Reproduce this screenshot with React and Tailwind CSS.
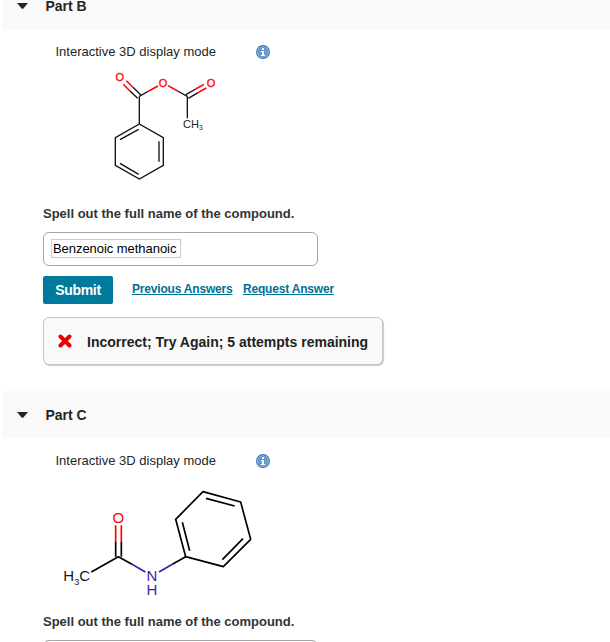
import React from "react";

function InfoIcon() {
  return (
    <svg width="14" height="14" viewBox="0 0 14 14" className="block">
      <defs>
        <linearGradient id="info" x1="0" y1="0" x2="0" y2="1">
          <stop offset="0" stopColor="#5f98d0" />
          <stop offset="1" stopColor="#6c98d2" />
        </linearGradient>
      </defs>
      <circle cx="7" cy="7" r="6.4" fill="#a9c6e6" stroke="#416fb0" strokeWidth="1.1" />
      <circle cx="7" cy="7" r="5.2" fill="url(#info)" />
      <path d="M6 3h2v2H6zM5 6H8v4h1v1H5v-1h1V7H5z" fill="#fff" />
    </svg>
  );
}

function PartHeader({ title, raised }) {
  return (
    <div className={`ml-[3px] flex h-[47px] items-center bg-[#f9f9f9] pl-[14px] ${raised ? "pb-[2px]" : ""}`}>
      <svg width="11" height="6" viewBox="0 0 11 6" className="block">
        <path d="M0 0H11L6.4 5.4Q5.5 6.2 4.6 5.4Z" fill="#252525" />
      </svg>
      <h2 className="ml-[17.5px] text-[14px] leading-[18px] font-bold text-[#252525]">{title}</h2>
    </div>
  );
}

function DisplayMode() {
  return (
    <div className="flex h-4 items-center pl-[55.5px]">
      <span className="w-[200.5px] text-[13px] leading-4 whitespace-nowrap text-[#252525]">
        Interactive 3D display mode
      </span>
      <InfoIcon />
    </div>
  );
}

/* Benzoic acetic anhydride */
function Anhydride() {
  return (
    <svg width="130" height="130" viewBox="0 0 390 390" className="mt-1 ml-[100px] block" fontFamily="Liberation Sans, Arial, sans-serif">
      <g fill="none" stroke="#111" strokeWidth="4">
        <path d="M118 180L190 221V304L118 345L46 304V221ZM118 97V180M262 97V163" />
        <path d="M116 196L60 227M177 232V293M116 331L60 298" />
        <path d="M118 97L146 81M262 97L233 81M122 92L98 69M113 103L89 80M258 92L287 75M265 103L294 86" />
      </g>
      <g fill="none" stroke="#f00" strokeWidth="4.5">
        <path d="M146 81L174 66M233 81L204 65M98 69L79 50M89 80L70 61M287 75L312 61M294 86L319 72" />
      </g>
      <g fontSize="33" fill="#f00" stroke="#f00" strokeWidth="0.8" textAnchor="middle">
        <text x="59" y="50">O</text>
        <text x="189" y="69">O</text>
        <text x="333" y="69">O</text>
      </g>
      <text x="249" y="193" fontSize="33" fill="#222">
        CH<tspan fontSize="20" dy="4">3</tspan>
      </text>
    </svg>
  );
}

/* Acetanilide */
function Acetanilide() {
  return (
    <svg width="220" height="125" viewBox="0 0 660 375" className="mt-[11px] ml-[50px] block" fontFamily="Liberation Sans, Arial, sans-serif">
      <g fill="none" stroke="#000" strokeWidth="5">
        <path d="M407 230L377 118L459 35L572 66L602 178L520 260Z" strokeLinejoin="round" />
        <path d="M419 212L397 127M468 55L554 78M579 176L517 239" />
        <path d="M124 276L205 230L246 253M407 230L367 253M197 230V184M214 230V184" />
      </g>
      <g fill="none" stroke="#f00" strokeWidth="5">
        <path d="M197 184V136M214 184V136" />
      </g>
      <g fill="none" stroke="#3d1fa8" strokeWidth="5">
        <path d="M246 253L286 276M367 253L327 276" />
      </g>
      <text x="205" y="129" fontSize="45" fill="#f00" textAnchor="middle">O</text>
      <g fontSize="45" fill="#3d1fa8" textAnchor="middle">
        <text x="306" y="302">N</text>
        <text x="306" y="345">H</text>
      </g>
      <g fill="#1a1a1a">
        <text x="40" y="303" fontSize="45">H</text>
        <text x="72" y="314" fontSize="29">3</text>
        <text x="88" y="303" fontSize="45">C</text>
      </g>
    </svg>
  );
}

function Prompt() {
  return (
    <p className="ml-[43px] text-[13px] leading-4 font-bold text-[#333]">
      Spell out the full name of the compound.
    </p>
  );
}

function AnswerBox({ value }) {
  return (
    <div className="ml-[43px] flex h-[34px] w-[275px] items-center rounded-[6px] border border-[#a5a5a5] bg-white pl-[7px]">
      {value && (
        <span className="mt-[-2px] flex h-[19px] w-[130px] items-center border border-[#ccc] pt-[2px] pl-px text-[13px] leading-4 tracking-[-0.05px] whitespace-nowrap text-black">
          {value}
        </span>
      )}
    </div>
  );
}

export default function App() {
  return (
    <div className="h-[642px] w-[610px] overflow-hidden bg-white font-['Liberation_Sans',Arial,sans-serif]">
      <section className="-mt-[17px] h-[408px]">
        <PartHeader title="Part B" raised />
        <div className="mt-[14px]"><DisplayMode /></div>
        <Anhydride />
        <div className="mt-[12px]"><Prompt /></div>
        <div className="mt-[10px]"><AnswerBox value="Benzenoic methanoic" /></div>
        <div className="mt-[10px] ml-[43px] flex h-[28px] items-center">
          <button className="h-[28px] w-[70px] rounded-[2px] bg-[#007a9c] text-[14px] font-bold tracking-[-0.3px] text-white">Submit</button>
          <a className="mt-[-2px] ml-[19px] w-[101px] text-[12px] leading-4 font-bold tracking-[-0.19px] whitespace-nowrap text-[#007096] underline">Previous Answers</a>
          <a className="mt-[-2px] ml-[10px] text-[12px] leading-4 font-bold tracking-[-0.19px] whitespace-nowrap text-[#007096] underline">Request Answer</a>
        </div>
        <div className="mt-[13px] ml-[43px] flex h-[48px] w-[340px] items-center rounded-[6px] border border-[#c5c5c5] bg-[#f9f9f9] pl-[14px] shadow-[1px_1px_1px_#ccc]">
          <svg width="15" height="14" viewBox="0 0 15 14" className="block">
            <path d="M2.5 2.5L11.5 11.5M11.5 2.5L2.5 11.5" stroke="#e80000" strokeWidth="4" strokeLinecap="round" />
          </svg>
          <span className="ml-[14px] pt-[2px] text-[14px] leading-4 font-bold whitespace-nowrap text-[#222]">
            Incorrect; Try Again; 5 attempts remaining
          </span>
        </div>
      </section>
      <section>
        <PartHeader title="Part C" />
        <div className="mt-[15px]"><DisplayMode /></div>
        <Acetanilide />
        <div className="mt-[9px]"><Prompt /></div>
        <div className="mt-[10px]"><AnswerBox /></div>
      </section>
    </div>
  );
}
